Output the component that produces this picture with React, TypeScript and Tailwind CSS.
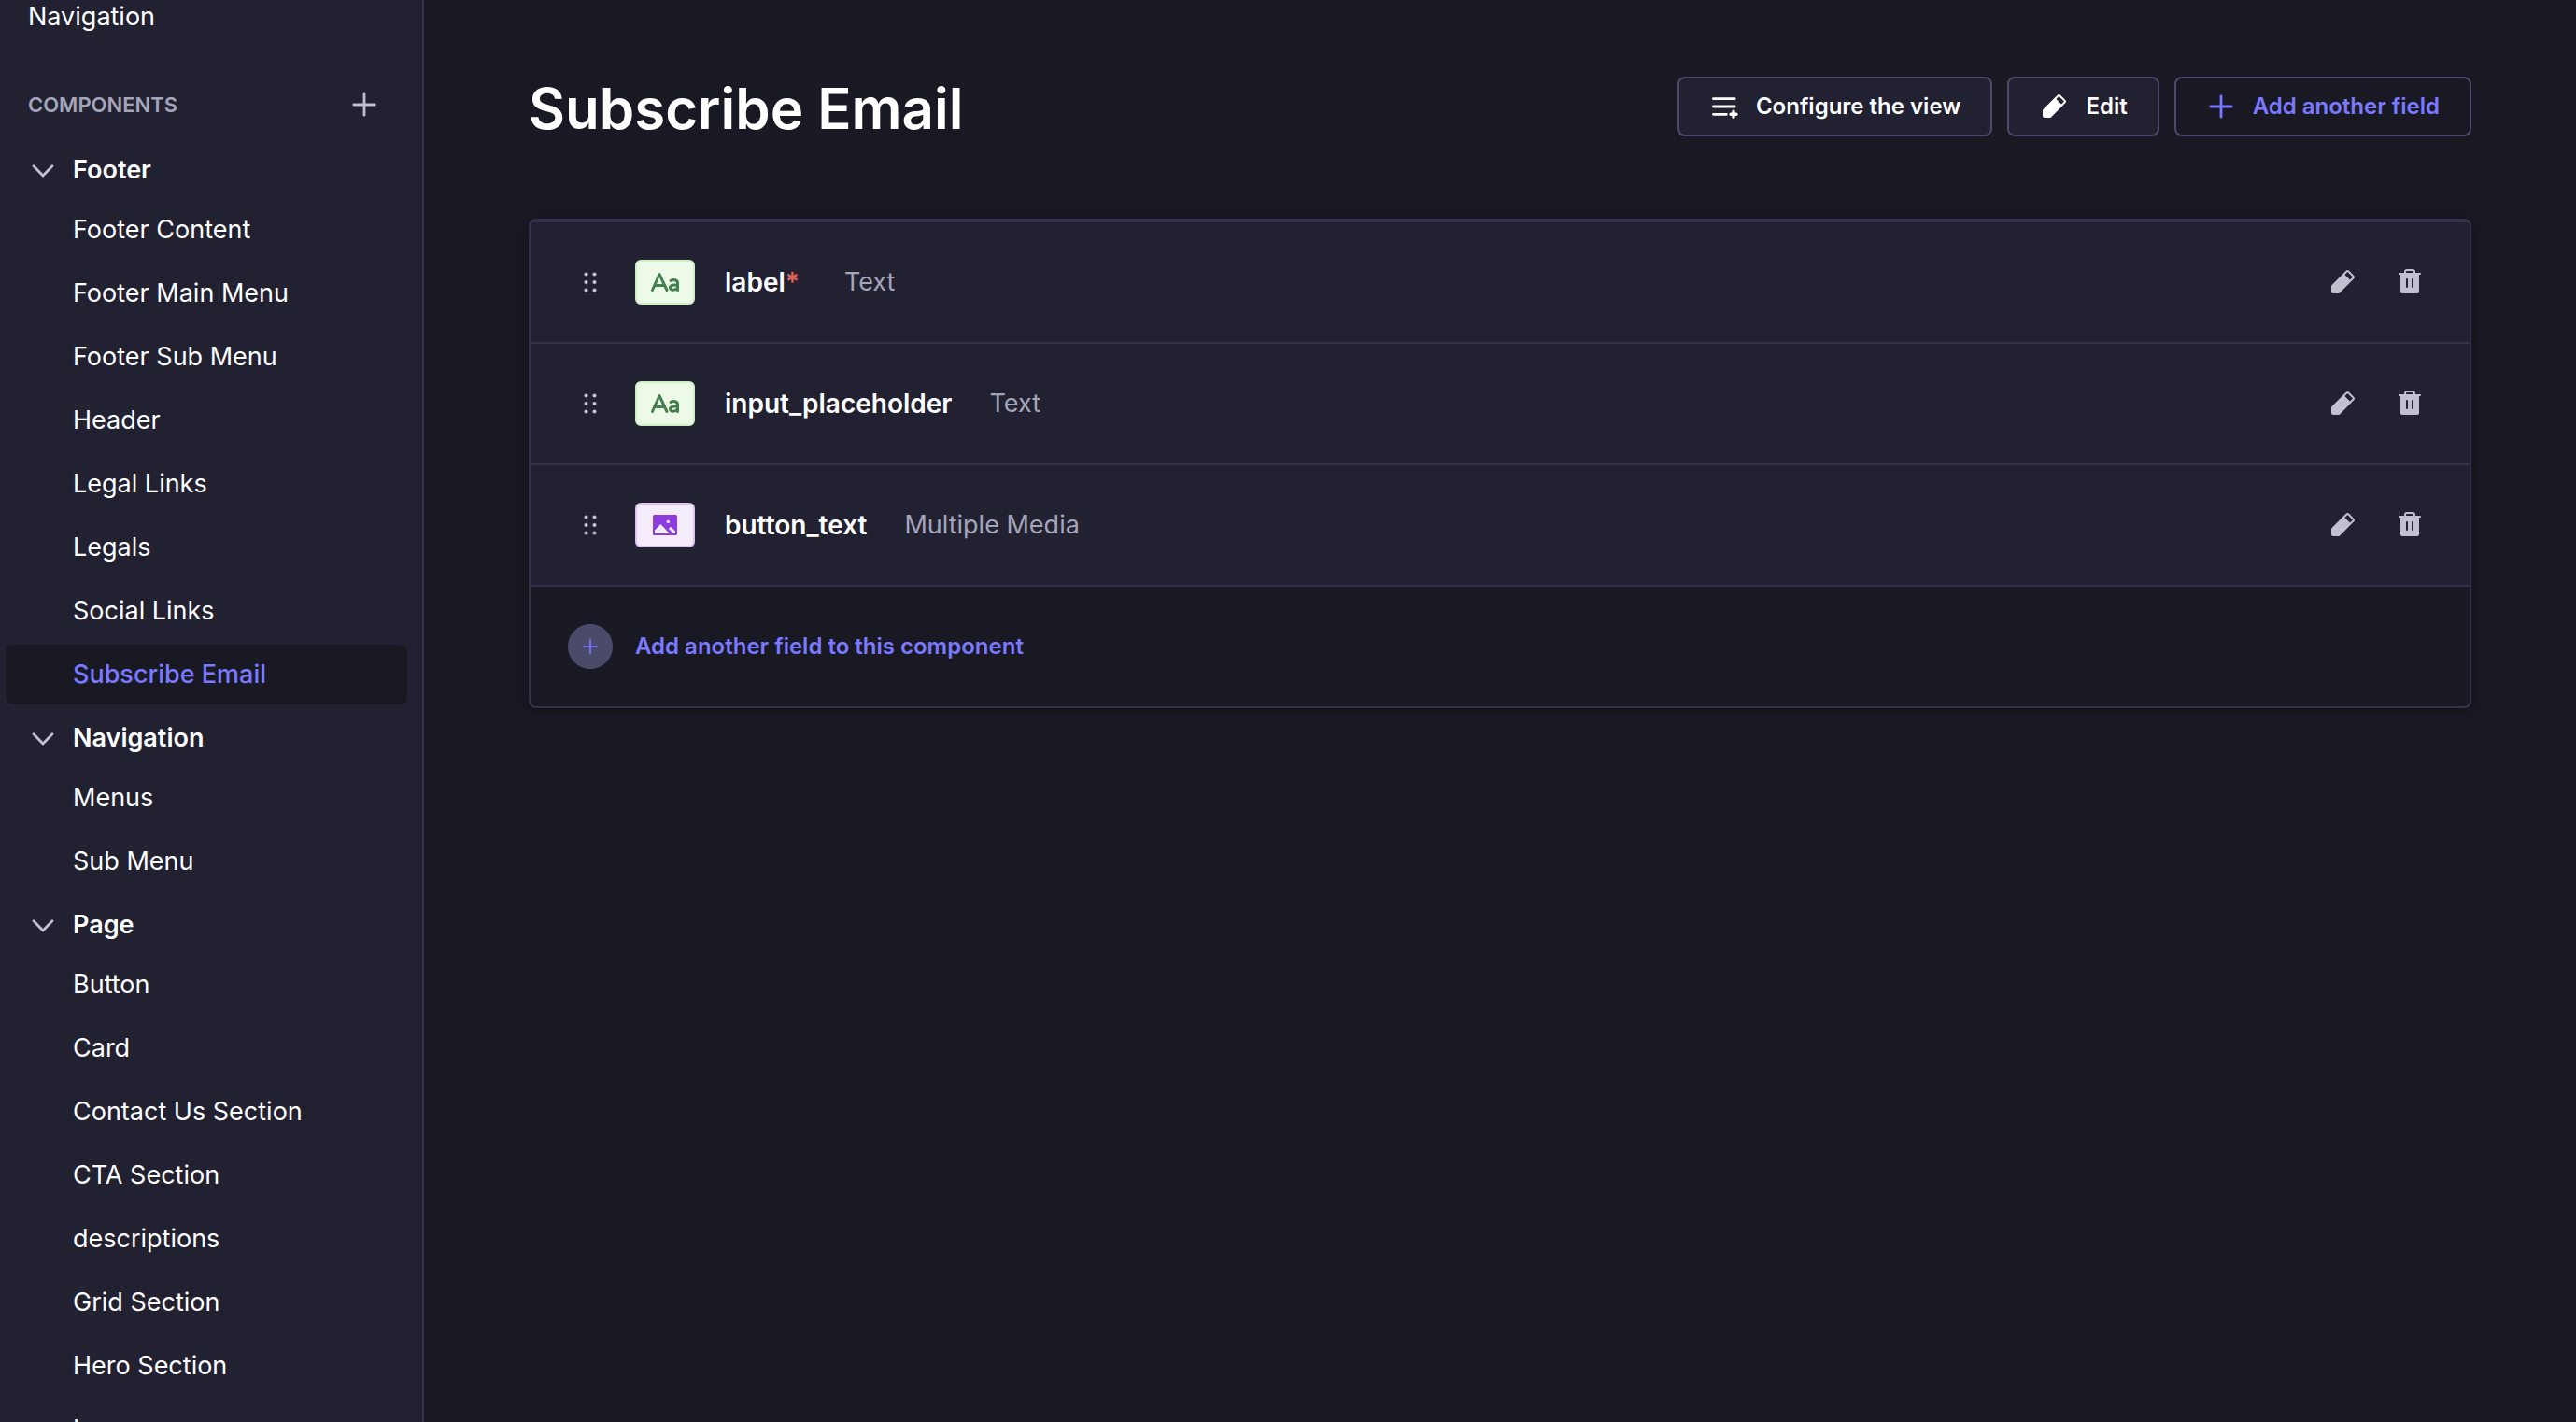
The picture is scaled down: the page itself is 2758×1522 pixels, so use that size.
import type { ReactNode } from "react";

const components = [
  {
    name: "Footer",
    items: ["Footer Content", "Footer Main Menu", "Footer Sub Menu", "Header", "Legal Links", "Legals", "Social Links", "Subscribe Email"],
  },
  { name: "Navigation", items: ["Menus", "Sub Menu"] },
  {
    name: "Page",
    items: ["Button", "Card", "Contact Us Section", "CTA Section", "descriptions", "Grid Section", "Hero Section", "Icon"],
  },
];

type Field = { name: string; type: string; kind: "text" | "media"; required?: boolean };

const fields: Field[] = [
  { name: "label", type: "Text", kind: "text", required: true },
  { name: "input_placeholder", type: "Text", kind: "text" },
  { name: "button_text", type: "Multiple Media", kind: "media" },
];

function Plus({ className }: { className: string }) {
  return (
    <svg viewBox="0 0 32 32" className={className} fill="none" stroke="currentColor" strokeWidth="2.8" strokeLinecap="round" aria-hidden="true">
      <path d="M16 4.800v22.400M4.800 16h22.400" />
    </svg>
  );
}

function Chevron() {
  return (
    <svg viewBox="0 0 32 32" className="size-8 text-[#c0c0cf]" fill="none" stroke="currentColor" strokeWidth="2.8" strokeLinecap="round" strokeLinejoin="round" aria-hidden="true">
      <path d="M6 11.800 16 22 26 11.800" />
    </svg>
  );
}

function Pencil({ className }: { className: string }) {
  return (
    <svg viewBox="0 0 32 32" className={className} fill="currentColor" aria-hidden="true">
      <path d="m28.414 9.171-5.585-5.585a2 2 0 0 0-2.829 0L4.586 19A2 2 0 0 0 4 20.414V26a2 2 0 0 0 2 2h5.586A2 2 0 0 0 13 27.414L28.414 12a2 2 0 0 0 0-2.829M24 13.585 18.414 8l3-3L27 10.585z" />
    </svg>
  );
}

function Trash() {
  return (
    <svg viewBox="0 0 32 32" className="size-8" fill="currentColor" aria-hidden="true">
      <path d="M27 6h-5V5a3 3 0 0 0-3-3h-6a3 3 0 0 0-3 3v1H5a1 1 0 0 0 0 2h1v18a2 2 0 0 0 2 2h16a2 2 0 0 0 2-2V8h1a1 1 0 0 0 0-2M14 21a1 1 0 0 1-2 0v-8a1 1 0 0 1 2 0zm6 0a1 1 0 0 1-2 0v-8a1 1 0 0 1 2 0zm0-15h-8V5a1 1 0 0 1 1-1h6a1 1 0 0 1 1 1z" />
    </svg>
  );
}

function ListPlus() {
  return (
    <svg viewBox="0 0 32 32" className="size-8" fill="none" stroke="currentColor" strokeWidth="2.8" strokeLinecap="round" aria-hidden="true">
      <path d="M4.400 7.700h22.800M4.400 16h22.800M4.400 24.300h14" />
      <path d="M23 24.300h6M26 21.300v6" strokeWidth="3.4" />
    </svg>
  );
}

function DragDots() {
  return (
    <svg viewBox="0 0 16 24" className="h-6 w-4" fill="currentColor" aria-hidden="true">
      {[3.500, 12, 20.500].map((y) => (
        <g key={y}>
          <circle cx="3.500" cy={y} r="2.100" />
          <circle cx="12.500" cy={y} r="2.100" />
        </g>
      ))}
    </svg>
  );
}

function TypeBadge({ kind }: { kind: Field["kind"] }) {
  if (kind === "media") {
    return (
      <span className="flex h-12 w-16 items-center justify-center rounded-md border-2 border-[#dcc2f1] bg-[#f4ecfb] text-[#8e3ce0]">
        <svg viewBox="0 0 26 22" className="h-[22px] w-[26px]" aria-hidden="true">
          <rect width="26" height="22" rx="1.500" fill="currentColor" />
          <circle cx="16.300" cy="7.400" r="1.700" fill="#f4ecfb" />
          <path d="M2 20v-3.500l6.300-6.500 9.500 10zM16.800 14.800l2.400-2 4.800 4.700V20h-2.200z" fill="#f4ecfb" />
        </svg>
      </span>
    );
  }
  return (
    <span className="flex h-12 w-16 items-center justify-center rounded-md border-2 border-[#cdf0c5] bg-[#edfae8] text-[#468050]">
      <svg viewBox="0 0 32 22" className="h-[22px] w-8" fill="none" stroke="currentColor" strokeWidth="3" strokeLinecap="round" strokeLinejoin="round" aria-hidden="true">
        <path d="M2.500 19.500 10 2.500l8 17M5.500 14.500h10" />
        <path d="M22 9.500c3-2 7.500-1 7.500 2.500v7.500M29.500 14.500c-3-1-8-.5-8 2.300 0 3.400 6.500 3.200 8-.3" />
      </svg>
    </span>
  );
}

function HeaderButton({ icon, children, primary }: { icon: ReactNode; children: ReactNode; primary?: boolean }) {
  return (
    <button
      type="button"
      className={
        primary
          ? "flex h-16 items-center gap-[18px] rounded-lg border-2 border-[#4a4a6a] px-8 text-2xl font-semibold text-[#7b79ff]"
          : "flex h-16 items-center gap-[18px] rounded-lg border-2 border-[#4a4a6a] bg-[#222132] px-8 text-2xl font-semibold text-white"
      }
    >
      {icon}
      {children}
    </button>
  );
}

function Sidebar() {
  return (
    <nav aria-label="Content types" className="w-[454px] shrink-0 overflow-hidden border-r-2 border-[#32324d] bg-[#222132] pr-4 pl-1.5 text-[27px] leading-10 text-white">
      <a href="#navigation" className="flex h-9 items-center pl-6">
        Navigation
      </a>
      <div className="mt-11 flex h-16 items-center justify-between pr-[30px] pl-6">
        <h2 className="text-[22px] font-semibold text-[#a5a5ba] uppercase">Components</h2>
        <button type="button" aria-label="Create new component" className="text-[#c0c0cf]">
          <Plus className="size-8" />
        </button>
      </div>
      <ul className="mt-1.5">
        {components.map((group) => (
          <li key={group.name}>
            <button type="button" aria-expanded="true" className="flex h-16 w-full items-center gap-4 pl-6 font-semibold">
              <Chevron />
              {group.name}
            </button>
            <ul className="flex flex-col gap-1 pb-1">
              {group.items.map((item) => (
                <li key={item}>
                  <a
                    href="#component"
                    className={
                      item === "Subscribe Email"
                        ? "flex h-16 items-center rounded-lg bg-[#191923] pl-[72px] font-medium text-[#7b79ff]"
                        : "flex h-16 items-center pl-[72px]"
                    }
                  >
                    {item}
                  </a>
                </li>
              ))}
            </ul>
          </li>
        ))}
      </ul>
    </nav>
  );
}

function FieldRow({ field }: { field: Field }) {
  return (
    <li className="flex h-[130px] items-center border-t-2 border-[#32324d] bg-[#222132] px-10 leading-10">
      <button type="button" aria-label={`Move ${field.name}`} className="flex w-12 justify-center text-[#c0c0cf]">
        <DragDots />
      </button>
      <span className="mr-8 ml-6">
        <TypeBadge kind={field.kind} />
      </span>
      <span className="text-[28px] font-semibold text-white">
        {field.name}
        {field.required && <span className="text-[#e0635a]">*</span>}
      </span>
      <span className={field.required ? "ml-12 text-[27px] text-[#a5a5ba]" : "ml-10 text-[27px] text-[#a5a5ba]"}>{field.type}</span>
      <span className="ml-auto flex gap-10 pr-2 text-[#c0c0cf]">
        <button type="button" aria-label={`Edit ${field.name}`}>
          <Pencil className="size-8" />
        </button>
        <button type="button" aria-label={`Delete ${field.name}`}>
          <Trash />
        </button>
      </span>
    </li>
  );
}

export default function App() {
  return (
    <div className="flex h-screen overflow-hidden bg-[#191923] font-['Inter',sans-serif]">
      <Sidebar />
      <main className="min-w-0 flex-1 px-28 pt-[82px]">
        <header className="flex items-start justify-between">
          <h1 className="text-[60px] leading-[68px] font-semibold text-white">Subscribe Email</h1>
          <div className="flex gap-4">
            <HeaderButton icon={<ListPlus />}>Configure the view</HeaderButton>
            <HeaderButton icon={<Pencil className="size-8" />}>Edit</HeaderButton>
            <HeaderButton primary icon={<Plus className="size-8" />}>
              Add another field
            </HeaderButton>
          </div>
        </header>
        <section aria-label="Fields" className="mt-[84px] overflow-hidden rounded-lg border-2 border-[#32324d] shadow-[0_2px_12px_rgba(3,3,5,0.35)]">
          <ul>
            {fields.map((field) => (
              <FieldRow key={field.name} field={field} />
            ))}
          </ul>
          <button type="button" className="flex h-[130px] w-full items-center gap-6 border-t-2 border-[#32324d] px-10 text-2xl font-semibold text-[#7b79ff]">
            <span className="flex size-12 items-center justify-center rounded-full bg-[#4a4a6a]">
              <Plus className="size-5" />
            </span>
            Add another field to this component
          </button>
        </section>
      </main>
    </div>
  );
}
